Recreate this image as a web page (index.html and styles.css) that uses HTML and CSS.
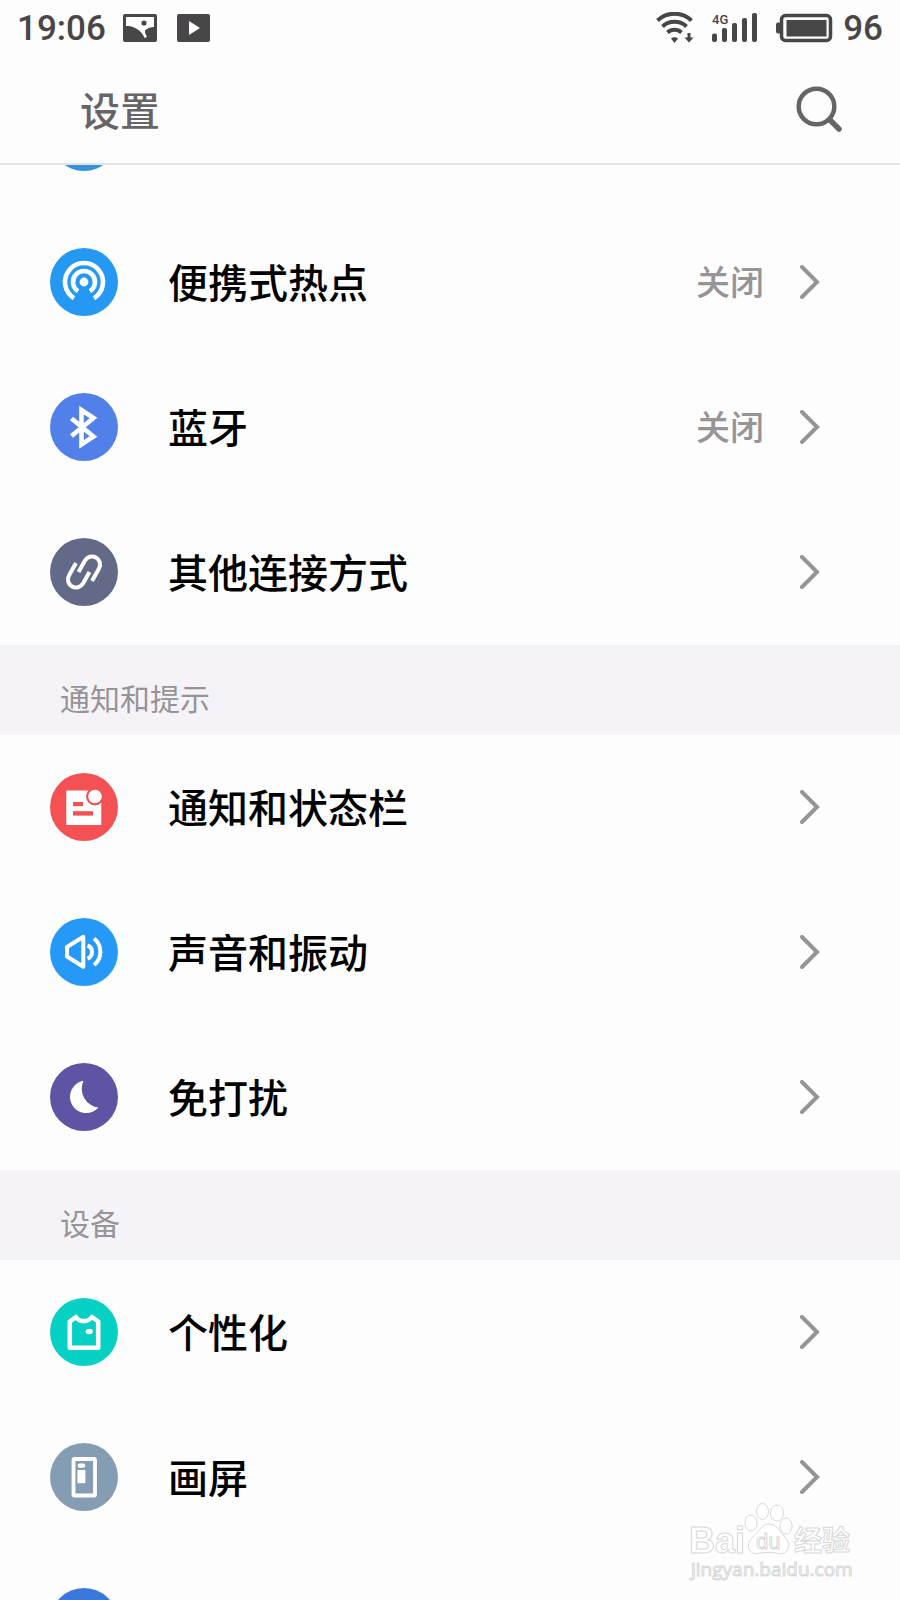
FILE: index.html
```html
<!DOCTYPE html>
<html lang="zh-CN">
<head>
    <meta charset="UTF-8">
    <meta name="viewport" content="width=device-width, initial-scale=1.0">
    <title>设置</title>
    <link rel="stylesheet" href="styles.css">
</head>
<body>
    <!-- Status bar -->
    <div class="status-bar">
        <span class="status-text">19:06</span>
        <svg class="status-photo" width="34" height="28" viewBox="0 0 34 28">
            <rect width="34" height="28" rx="2" fill="#484648"/>
            <path d="M3 3H31V13C28 13 24.500 14 22 16.500C21.500 18.500 23 20.500 24 23L21.500 24C20.500 21 18 17.500 14 15C10 12.500 7 12 3 12Z" fill="#fff"/>
            <circle cx="21" cy="9" r="2.600" fill="#484648"/>
        </svg>
        <svg class="status-play" width="33" height="28" viewBox="0 0 33 28">
            <rect width="33" height="28" rx="2" fill="#484648"/>
            <path d="M12 7L23 14L12 21Z" fill="#fff"/>
        </svg>
        <div class="status-right">
            <svg width="38" height="32" viewBox="0 0 38 32">
                <g fill="none" stroke="#484648" stroke-width="4">
                    <path d="M1.500 8.500C11 -0.500 26 -0.500 35.500 8.500"/>
                    <path d="M6.500 14.500C13 8.300 24 8.300 30.500 14.500"/>
                    <path d="M11.500 20.500C15.500 16.800 21.500 16.800 25.500 20.500"/>
                </g>
                <path d="M15 26.500C17 24.800 20 24.800 22 26.500L18.500 31Z" fill="#484648"/>
                <path d="M31.500 21H34.500V25.500H37.500L33 30.500L28.500 25.500H31.500Z" fill="#484648"/>
            </svg>
            <svg class="signal" width="46" height="32" viewBox="0 0 46 32">
                <g fill="#484648">
                    <rect x="0" y="21.500" width="5" height="8.500" rx="2"/>
                    <rect x="10" y="16" width="5" height="14" rx="2"/>
                    <rect x="20" y="11" width="5" height="19" rx="2"/>
                    <rect x="30" y="6" width="5" height="24" rx="2"/>
                    <rect x="40" y="1" width="5" height="29" rx="2"/>
                </g>
                <text x="0" y="12" class="signal-type">4G</text>
            </svg>
            <svg width="57" height="30" viewBox="0 0 57 30">
                <rect x="5.500" y="2.500" width="49" height="25" rx="4" fill="none" stroke="#484648" stroke-width="3.500"/>
                <rect x="10.500" y="7" width="40" height="16.500" fill="#484648"/>
                <rect x="0" y="9.500" width="5" height="11" rx="2" fill="#484648"/>
            </svg>
            <span class="status-text">96</span>
        </div>
    </div>

    <header class="header">
        <h1 class="title">设置</h1>
        <button class="search" aria-label="搜索">
            <svg width="46" height="46" viewBox="0 0 46 46" fill="none" stroke="#666466" stroke-width="4.500">
                <circle cx="20.500" cy="20.500" r="17.800"/>
                <path d="M34 34L43 43" stroke-width="5.500" stroke-linecap="round"/>
            </svg>
        </button>
    </header>

    <main class="content">
        <ul class="list list-scrolled">
            <li>
                <a class="row" href="#" aria-label="WLAN">
                    <span class="icon icon-wlan"></span>
                </a>
            </li>
            <li>
                <a class="row" href="#">
                    <span class="icon icon-hotspot">
                        <svg viewBox="0 0 68 68" fill="none" stroke="#fff" stroke-width="4.600">
                            <path d="M24 50.200A19 19 0 1 1 44 50.200"/>
                            <path d="M28 43.200A11 11 0 1 1 40 43.200"/>
                            <circle cx="34" cy="34" r="4.400" fill="#fff" stroke="none"/>
                        </svg>
                    </span>
                    <span class="label">便携式热点</span>
                    <span class="value">关闭</span>
                    <svg class="chevron" viewBox="0 0 20 34"><path d="M2 2L17 17L2 32"/></svg>
                </a>
            </li>
            <li>
                <a class="row" href="#">
                    <span class="icon icon-bluetooth">
                        <svg viewBox="0 0 68 68" fill="none" stroke="#fff" stroke-width="4.600">
                            <path d="M21.500 25.500L43.500 43.500L31.500 51.500V17L43.500 25L21.500 43"/>
                        </svg>
                    </span>
                    <span class="label">蓝牙</span>
                    <span class="value">关闭</span>
                    <svg class="chevron" viewBox="0 0 20 34"><path d="M2 2L17 17L2 32"/></svg>
                </a>
            </li>
            <li>
                <a class="row" href="#">
                    <span class="icon icon-link">
                        <svg viewBox="0 0 68 68" fill="none" stroke="#fff" stroke-width="4">
                            <path d="M26 25L19 37.500A8 8 0 0 0 33 45.500L39.500 34"/>
                            <path d="M42 43L49 30.500A8 8 0 0 0 35 22.500L28.500 34"/>
                        </svg>
                    </span>
                    <span class="label">其他连接方式</span>
                    <svg class="chevron" viewBox="0 0 20 34"><path d="M2 2L17 17L2 32"/></svg>
                </a>
            </li>
        </ul>

        <h2 class="section-title">通知和提示</h2>
        <ul class="list">
            <li>
                <a class="row" href="#">
                    <span class="icon icon-notice">
                        <svg viewBox="0 0 68 68">
                            <rect x="16.300" y="17.500" width="35" height="34.500" fill="#fff"/>
                            <circle cx="45" cy="23.500" r="9" fill="#f35153"/>
                            <circle cx="45" cy="23.500" r="6.800" fill="#fff"/>
                            <rect x="23" y="29" width="10" height="4.200" fill="#f35153"/>
                            <rect x="23" y="38.200" width="20" height="4.400" fill="#f35153"/>
                        </svg>
                    </span>
                    <span class="label">通知和状态栏</span>
                    <svg class="chevron" viewBox="0 0 20 34"><path d="M2 2L17 17L2 32"/></svg>
                </a>
            </li>
            <li>
                <a class="row" href="#">
                    <span class="icon icon-sound">
                        <svg viewBox="0 0 68 68" fill="none" stroke="#fff" stroke-width="4" stroke-linejoin="round">
                            <path d="M17 29L33.300 18.800V48.800L17 38.500Z"/>
                            <path d="M37.500 27.500C43.500 29.500 43.500 38.500 37.500 40.500"/>
                            <path d="M44 20.500C52.500 27 52.500 40.500 44 47"/>
                        </svg>
                    </span>
                    <span class="label">声音和振动</span>
                    <svg class="chevron" viewBox="0 0 20 34"><path d="M2 2L17 17L2 32"/></svg>
                </a>
            </li>
            <li>
                <a class="row" href="#">
                    <span class="icon icon-moon">
                        <svg viewBox="0 0 68 68">
                            <path d="M33.500 17.700A16.300 16.300 0 1 0 48.500 44.500A19 19 0 0 1 33.500 17.700Z" fill="#fff"/>
                        </svg>
                    </span>
                    <span class="label">免打扰</span>
                    <svg class="chevron" viewBox="0 0 20 34"><path d="M2 2L17 17L2 32"/></svg>
                </a>
            </li>
        </ul>

        <h2 class="section-title">设备</h2>
        <ul class="list">
            <li>
                <a class="row" href="#">
                    <span class="icon icon-theme">
                        <svg viewBox="0 0 68 68" fill="none" stroke="#fff" stroke-width="4.600" stroke-linejoin="round">
                            <path d="M19.800 23.500L26 19C29 24.500 38 24.500 42 19L48.200 23.500V49.800H19.800Z"/>
                            <ellipse cx="39.200" cy="33.500" rx="3.600" ry="2.700" fill="#fff" stroke="none"/>
                        </svg>
                    </span>
                    <span class="label">个性化</span>
                    <svg class="chevron" viewBox="0 0 20 34"><path d="M2 2L17 17L2 32"/></svg>
                </a>
            </li>
            <li>
                <a class="row" href="#">
                    <span class="icon icon-screen">
                        <svg viewBox="0 0 68 68">
                            <rect x="23.500" y="16" width="21.500" height="36.500" rx="1" fill="none" stroke="#fff" stroke-width="3.800"/>
                            <rect x="27.600" y="20.500" width="7.600" height="4.200" rx="2" fill="#fff"/>
                            <rect x="27.400" y="27" width="8" height="13.200" fill="#fff"/>
                        </svg>
                    </span>
                    <span class="label">画屏</span>
                    <svg class="chevron" viewBox="0 0 20 34"><path d="M2 2L17 17L2 32"/></svg>
                </a>
            </li>
            <li>
                <a class="row" href="#" aria-label="显示">
                    <span class="icon icon-display"></span>
                </a>
            </li>
        </ul>
    </main>

    <!-- Watermark -->
    <svg class="watermark" width="166" height="80" viewBox="0 0 166 80">
        <g fill="#fff" stroke="#d8d8d8" stroke-width="1">
            <text class="mark-latin" x="1" y="51">Bai</text>
            <ellipse cx="63" cy="21" rx="6" ry="8"/>
            <ellipse cx="74.500" cy="9.500" rx="6" ry="8"/>
            <ellipse cx="89" cy="11" rx="6.500" ry="8"/>
            <ellipse cx="98" cy="24" rx="6" ry="8"/>
            <path d="M81 22C74 22 72 29 65 35C58 41 59 52 69 51.500C77 50 84 50 91 51.500C101 53 103 42 97 35C91 29 88 22 81 22Z"/>
            <text class="mark-du" x="68" y="47">du</text>
            <text class="mark-cjk" x="106" y="49">经验</text>
            <text class="mark-url" x="3" y="74">jingyan.baidu.com</text>
        </g>
    </svg>
</body>
</html>
```
FILE: styles.css
```css
* {
    box-sizing: border-box;
}
body {
    display: flex;
    flex-direction: column;
    position: relative;
    height: 100vh;
    margin: 0;
    overflow: hidden;
    background-color: #fdfdfd;
    color: #000;
    font-family: "Noto Sans CJK SC", sans-serif;
}

/* Status bar */
.status-bar {
    display: flex;
    flex: none;
    align-items: center;
    height: 56px;
    padding: 0 17px;
}
.status-text {
    padding-top: 2px;
    color: #484648;
    font-family: Roboto, sans-serif;
    font-size: 35px;
    font-weight: 500;
    line-height: 54px;
}
.status-photo {
    margin-left: 17px;
}
.status-play {
    margin-left: 20px;
}
.status-right {
    display: flex;
    align-items: center;
    gap: 18px;
    margin-left: auto;
}
.status-right .status-text {
    margin-left: -8px;
}
.signal {
    overflow: visible;
}
.signal-type {
    fill: #484648;
    font-family: Roboto, sans-serif;
    font-size: 13px;
    font-weight: 500;
}

/* Header */
.header {
    display: flex;
    flex: none;
    align-items: center;
    justify-content: space-between;
    height: 109px;
    padding: 0 58px 2px 80px;
    border-bottom: 2px solid #e4e4e4;
}
.title {
    margin: 0;
    color: #666466;
    font-size: 40px;
    font-weight: 500;
    line-height: 60px;
}
.search {
    display: flex;
    padding: 0;
    border: none;
    background: none;
    cursor: pointer;
}

/* Settings list */
.content {
    flex: 1;
    min-height: 0;
    overflow: hidden;
}
.list {
    margin: 0;
    padding: 0;
    list-style: none;
}
.list-scrolled {
    margin-top: -100px;
}
.row {
    display: flex;
    align-items: center;
    height: 145px;
    padding: 0 80px 2px 50px;
    color: #000;
    text-decoration: none;
}
.icon {
    flex: none;
    width: 68px;
    height: 68px;
    border-radius: 50%;
}
.icon svg {
    display: block;
}
.icon-wlan {
    background-color: #3592dc;
}
.icon-hotspot {
    background-color: #2598f4;
}
.icon-bluetooth {
    background-color: #5180e9;
}
.icon-link {
    background-color: #626a88;
}
.icon-notice {
    background-color: #f35153;
}
.icon-sound {
    background-color: #2598f8;
}
.icon-moon {
    background-color: #5d54a4;
}
.icon-theme {
    background-color: #04d0c4;
}
.icon-screen {
    background-color: #859db3;
}
.icon-display {
    background-color: #3b78dd;
}
.label {
    flex: 1;
    margin-left: 50px;
    padding-bottom: 2px;
    font-size: 40px;
    font-weight: 500;
    line-height: 60px;
}
.value {
    margin-right: 36px;
    padding-bottom: 2px;
    color: #969496;
    font-size: 34px;
    font-weight: 500;
    line-height: 60px;
}
.chevron {
    flex: none;
    width: 20px;
    height: 34px;
    fill: none;
    stroke: #969496;
    stroke-width: 4;
    stroke-linecap: round;
}
.section-title {
    height: 90px;
    margin: 0;
    padding: 30px 60px 0;
    background-color: #f5f3f7;
    color: #969496;
    font-size: 30px;
    font-weight: 400;
    line-height: 44px;
}

/* Watermark */
.watermark {
    position: absolute;
    right: 46px;
    bottom: 18px;
}
.mark-latin {
    font-family: "Liberation Sans", sans-serif;
    font-size: 36px;
    font-weight: bold;
}
.mark-du {
    font-family: "Liberation Sans", sans-serif;
    font-size: 22px;
}
.mark-cjk {
    font-size: 28px;
    font-weight: bold;
}
.mark-url {
    font-family: "Open Sans", sans-serif;
    font-size: 19px;
}
```
